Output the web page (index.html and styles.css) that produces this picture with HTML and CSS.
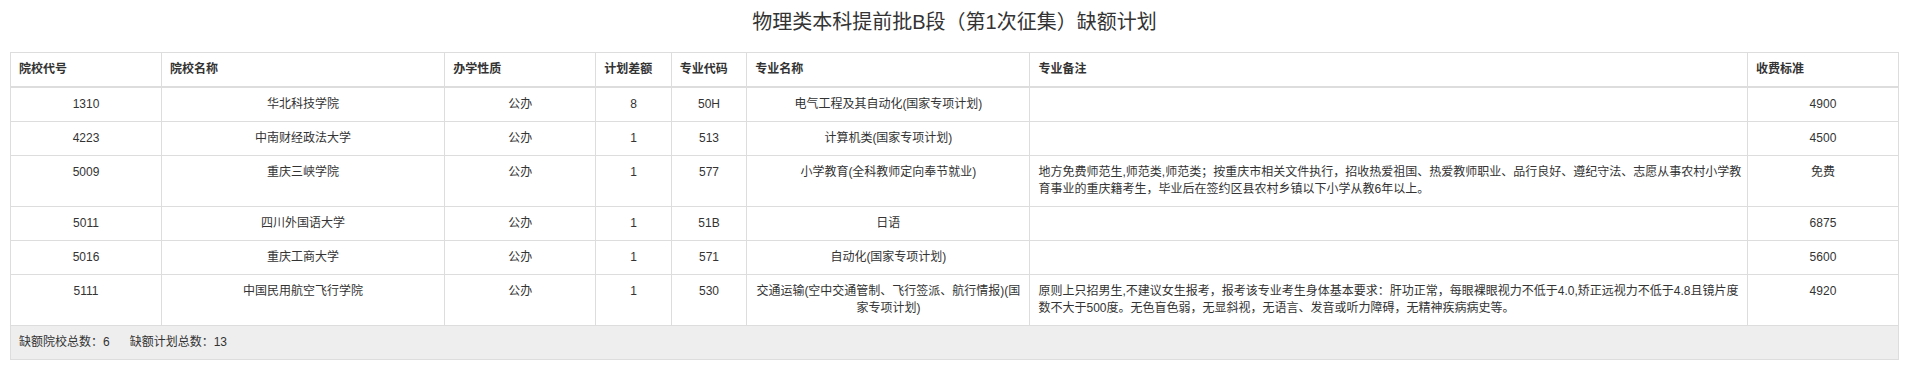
FILE: index.html
```html
<!DOCTYPE html>
<html lang="zh-CN">
<head>
<meta charset="utf-8">
<title>物理类本科提前批B段（第1次征集）缺额计划</title>
<link rel="stylesheet" href="styles.css">
</head>
<body>
<div class="page">
  <h2 class="title">物理类本科提前批B段（第1次征集）缺额计划</h2>
  <table class="plan">
    <colgroup>
      <col class="w8"><col class="w15"><col class="w8"><col class="w4"><col class="w4"><col class="w15"><col class="w38"><col class="w8">
    </colgroup>
    <thead>
      <tr>
        <th>院校代号</th><th>院校名称</th><th>办学性质</th><th>计划差额</th><th>专业代码</th><th>专业名称</th><th>专业备注</th><th>收费标准</th>
      </tr>
    </thead>
    <tbody>
      <tr>
        <td>1310</td><td>华北科技学院</td><td>公办</td><td>8</td><td>50H</td><td>电气工程及其自动化(国家专项计划)</td><td class="note"></td><td>4900</td>
      </tr>
      <tr>
        <td>4223</td><td>中南财经政法大学</td><td>公办</td><td>1</td><td>513</td><td>计算机类(国家专项计划)</td><td class="note"></td><td>4500</td>
      </tr>
      <tr>
        <td>5009</td><td>重庆三峡学院</td><td>公办</td><td>1</td><td>577</td><td>小学教育(全科教师定向奉节就业)</td><td class="note">地方免费师范生,师范类,师范类；按重庆市相关文件执行，招收热爱祖国、热爱教师职业、品行良好、遵纪守法、志愿从事农村小学教<br>育事业的重庆籍考生，毕业后在签约区县农村乡镇以下小学从教6年以上。</td><td>免费</td>
      </tr>
      <tr>
        <td>5011</td><td>四川外国语大学</td><td>公办</td><td>1</td><td>51B</td><td>日语</td><td class="note"></td><td>6875</td>
      </tr>
      <tr>
        <td>5016</td><td>重庆工商大学</td><td>公办</td><td>1</td><td>571</td><td>自动化(国家专项计划)</td><td class="note"></td><td>5600</td>
      </tr>
      <tr>
        <td>5111</td><td>中国民用航空飞行学院</td><td>公办</td><td>1</td><td>530</td><td class="nowrap">交通运输(空中交通管制、飞行签派、航行情报)(国<br>家专项计划)</td><td class="note">原则上只招男生,不建议女生报考，报考该专业考生身体基本要求：肝功正常，每眼裸眼视力不低于4.0,矫正远视力不低于4.8且镜片度<br>数不大于500度。无色盲色弱，无显斜视，无语言、发音或听力障碍，无精神疾病病史等。</td><td>4920</td>
      </tr>
    </tbody>
    <tfoot>
      <tr>
        <td colspan="8"><span class="stat">缺额院校总数：6</span><span class="stat">缺额计划总数：13</span></td>
      </tr>
    </tfoot>
  </table>
</div>
</body>
</html>
```

FILE: styles.css
```css
html, body {
  margin: 0;
  padding: 0;
  background: #fff;
}

body {
  font-family: "Liberation Sans", "Noto Sans CJK SC", sans-serif;
  font-size: 12px;
  line-height: 17px;
  color: #333;
}

.page {
  padding: 0 8px 0 10px;
}

.title {
  margin: 8px 0 16px;
  font-size: 20px;
  line-height: 28px;
  font-weight: normal;
  text-align: center;
  color: #333;
}

.plan {
  width: 100%;
  border-collapse: collapse;
  border-spacing: 0;
  table-layout: fixed;
  border: 1px solid #ddd;
}

.w4 { width: 4%; }
.w8 { width: 8%; }
.w15 { width: 15%; }
.w38 { width: 38%; }

.plan th,
.plan td {
  padding: 8px;
  border: 1px solid #ddd;
  vertical-align: top;
  line-height: 17px;
}

.plan th {
  text-align: left;
  font-weight: bold;
  border-bottom: 2px solid #ddd;
}

.plan tbody td {
  text-align: center;
}

.plan tbody td.note {
  text-align: left;
  white-space: nowrap;
}

.plan tbody td.nowrap {
  white-space: nowrap;
}

.plan tfoot td {
  background: #eee;
  text-align: left;
  padding: 8px;
}

.stat {
  margin-right: 20px;
}
```
